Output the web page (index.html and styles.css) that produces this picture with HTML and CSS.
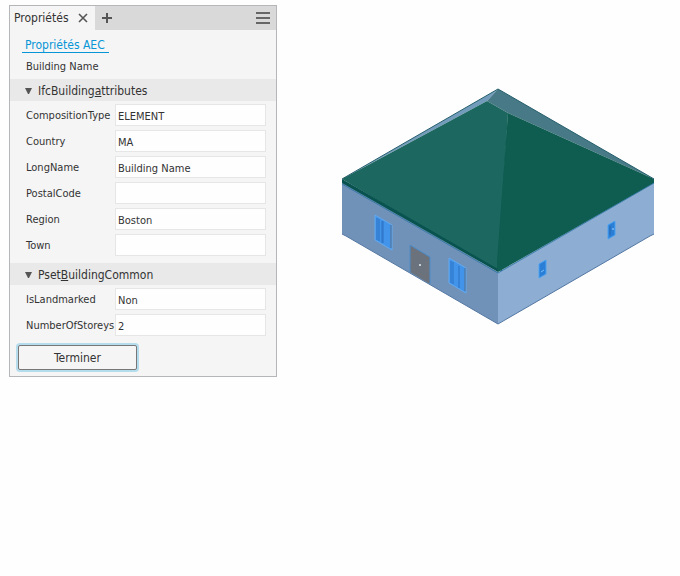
FILE: index.html
```html
<!DOCTYPE html>
<html lang="fr">
<head>
    <meta charset="UTF-8">
    <meta name="viewport" content="width=device-width, initial-scale=1.0">
    <title>Propriétés AEC</title>
    <link rel="stylesheet" href="styles.css">
</head>
<body>
    <main class="workspace">
        <form class="panel">
            <div class="tab-bar">
                <div class="tab">
                    <span>Propriétés</span>
                    <button type="button" class="icon-button" aria-label="Fermer">
                        <svg width="10" height="10" viewBox="0 0 10 10"><path d="M1 1l8 8M9 1l-8 8" stroke="#555" stroke-width="1.6"/></svg>
                    </button>
                </div>
                <button type="button" class="icon-button add" aria-label="Ajouter">
                    <svg width="10" height="10" viewBox="0 0 10 10"><path d="M5 0v10M0 5h10" stroke="#555" stroke-width="2"/></svg>
                </button>
                <button type="button" class="icon-button menu" aria-label="Menu">
                    <svg width="14" height="12" viewBox="0 0 14 12"><path d="M0 1h14M0 6h14M0 11h14" stroke="#666" stroke-width="2"/></svg>
                </button>
            </div>

            <a class="sub-tab" href="#">Propriétés AEC</a>
            <p class="object-name">Building Name</p>

            <details open>
                <summary>
                    <svg width="8" height="6" viewBox="0 0 8 6"><path d="M0 0h7L4 6H3z" fill="#555"/></svg>
                    <span>IfcBuilding<u>a</u>ttributes</span>
                </summary>
                <div class="fields">
                    <label for="compositionType">CompositionType</label>
                    <input type="text" id="compositionType" value="ELEMENT">
                    <label for="country">Country</label>
                    <input type="text" id="country" value="MA">
                    <label for="longName">LongName</label>
                    <input type="text" id="longName" value="Building Name">
                    <label for="postalCode">PostalCode</label>
                    <input type="text" id="postalCode">
                    <label for="region">Region</label>
                    <input type="text" id="region" value="Boston">
                    <label for="town">Town</label>
                    <input type="text" id="town">
                </div>
            </details>

            <details open>
                <summary>
                    <svg width="8" height="6" viewBox="0 0 8 6"><path d="M0 0h7L4 6H3z" fill="#555"/></svg>
                    <span>Pset<u>B</u>uildingCommon</span>
                </summary>
                <div class="fields">
                    <label for="isLandmarked">IsLandmarked</label>
                    <input type="text" id="isLandmarked" value="Non">
                    <label for="numberOfStoreys">NumberOfStoreys</label>
                    <input type="text" id="numberOfStoreys" value="2">
                </div>
            </details>

            <button type="button" class="finish">Terminer</button>
        </form>

        <div class="viewer">
            <svg class="building" viewBox="342 88 313 238" role="img" aria-label="Building Name">
                <!-- walls -->
                <path d="M342 182L498 272V324L346 236L342 234z" fill="#7192b8"/>
                <path d="M498 272L654 182V234L650 236L498 324z" fill="#8dadd2"/>
                <path d="M342 234l4 2 152 88 152-88 4-2" fill="none" stroke="#5478a3"/>
                <!-- roof -->
                <path d="M498 89L342 179l145-78z" fill="#739cbc"/>
                <path d="M498 89l156 90-146-66-21-12z" fill="#487987"/>
                <path d="M342 179L370 164L487 101l21 12-10 158-156-92z" fill="#1c675f"/>
                <path d="M508 113l146 66v4l-156 89-1-10z" fill="#0f5d51"/>
                <path d="M508 113l-6 158-5-2z" fill="#0f5d51"/>
                <path d="M342 179l156 90v3L342 183z" fill="#08534f"/>
                <path d="M342 179L498 89l156 90" fill="none" stroke="#255f6c"/>
                <path d="M342 184l156 89 156-90" fill="none" stroke="#2b75a5" stroke-width="0.8"/>
                <!-- front windows and door -->
                <path d="M375 215l17 10v25l-17-10z" fill="#4294ea" stroke="#62a9ef"/>
                <path d="M377 218v22M379 219v22M382 221v22M383 221v22" stroke="#2b71c2"/>
                <path d="M391 225v23" stroke="#55708e"/>
                <path d="M449 258l17 10v25l-17-10z" fill="#4294ea" stroke="#62a9ef"/>
                <path d="M451 261v22M453 262v22M459 266v22" stroke="#2b71c2"/>
                <path d="M465 268v23" stroke="#55708e"/>
                <path d="M410 245l20 12v27l-20-12z" fill="#6a737d"/>
                <path d="M410 272v-27l20 12v27" fill="none" stroke="#4d8cc9"/>
                <path d="M413 250l14 8v21M413 254v15l12 8" fill="none" stroke="#866f61" stroke-dasharray="1 3"/>
                <circle cx="420" cy="265" r="1" fill="#e6edf3"/>
                <!-- side windows -->
                <path d="M539 264l7-4v14l-7 4z" fill="#2b7ed6" stroke="#4ba2f1"/>
                <path d="M541 272l3-2" stroke="#7cc0fb"/>
                <path d="M608 225l7-4v14l-7 4z" fill="#2b7ed6" stroke="#4ba2f1"/>
                <path d="M610 226v9" stroke="#2567b0"/>
                <path d="M613 228v2" stroke="#a5d5fb"/>
            </svg>
        </div>
    </main>
</body>
</html>
```
FILE: styles.css
```css
:root {
    --panel-color: #f5f5f5;
    --bar-color: #d9d9d9;
    --section-color: #e9e9e9;
    --text-color: #333;
    --accent-color: #0696d7;
    --border-color: #b4b6ba;
}
* {
    box-sizing: border-box;
}
body {
    margin: 0;
    background-color: #fefefe;
    color: var(--text-color);
    font-family: "DejaVu Sans Condensed", "Noto Sans", sans-serif;
    font-size: 11px;
}
button, input {
    font: inherit;
    color: inherit;
}
.workspace {
    display: grid;
    grid-template-columns: 268px 1fr;
    align-items: start;
    padding: 5px 25px 5px 9px;
}
.panel {
    background-color: var(--panel-color);
    border: 1px solid var(--border-color);
    padding-bottom: 6px;
}
.tab-bar {
    display: flex;
    height: 24px;
    background-color: var(--bar-color);
}
.tab {
    display: flex;
    align-items: center;
    gap: 9px;
    padding: 0 7px 0 4px;
    background-color: var(--panel-color);
    font-size: 12px;
}
.icon-button {
    display: flex;
    align-items: center;
    padding: 0;
    border: none;
    background: none;
}
.add {
    margin-left: 7px;
}
.menu {
    margin-left: auto;
    margin-right: 6px;
}
.sub-tab {
    display: inline-block;
    margin: 7px 0 0 12px;
    padding: 1px 4px 0 3px;
    border-bottom: 1px solid var(--accent-color);
    color: var(--accent-color);
    font-size: 12px;
    line-height: 14px;
    text-decoration: none;
}
.object-name {
    margin: 6px 16px 4px;
    line-height: 16px;
}
summary {
    display: flex;
    align-items: center;
    gap: 5px;
    height: 22px;
    padding: 2px 0 0 15px;
    background-color: var(--section-color);
    font-size: 12px;
}
.fields {
    display: grid;
    grid-template-columns: 89px 1fr;
    row-gap: 4px;
    align-items: center;
    padding: 3px 10px 7px 16px;
}
.fields input {
    width: 100%;
    height: 22px;
    padding: 2px 2px 0;
    border: 1px solid #e6e6e6;
    background-color: #fefefe;
}
.finish {
    display: block;
    width: 119px;
    height: 25px;
    margin: 2px 8px 0;
    border: 1px solid #777;
    border-radius: 2px;
    background-color: var(--panel-color);
    box-shadow: 0 0 0 2px #b5dcec;
    font-size: 12px;
}
.viewer {
    padding: 83px 0 0 65px;
}
.building {
    display: block;
    width: 100%;
    max-width: 313px;
}
```
